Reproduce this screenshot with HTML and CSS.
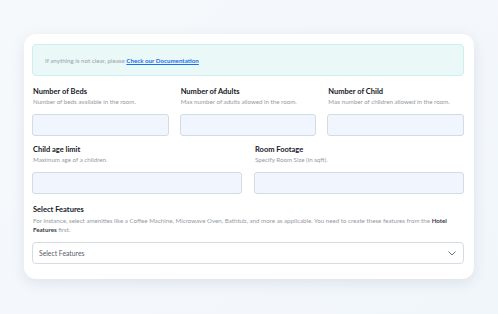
FILE: index.html
```html
<!DOCTYPE html>
<html>
<head>
<meta charset="utf-8">
<link rel="stylesheet" href="styles.css">
</head>
<body>
<div class="card">
  <div class="alert">If anything is not clear, please <a href="#" class="alert-link">Check our Documentation</a></div>
  <div class="row row-3">
    <div class="field">
      <div class="label">Number of Beds</div>
      <div class="desc">Number of beds available in the room.</div>
      <div class="input"></div>
    </div>
    <div class="field">
      <div class="label">Number of Adults</div>
      <div class="desc">Max number of adults allowed in the room.</div>
      <div class="input"></div>
    </div>
    <div class="field">
      <div class="label">Number of Child</div>
      <div class="desc">Max number of children allowed in the room.</div>
      <div class="input"></div>
    </div>
  </div>
  <div class="row row-2">
    <div class="field">
      <div class="label">Child age limit</div>
      <div class="desc">Maximum age of a children.</div>
      <div class="input"></div>
    </div>
    <div class="field">
      <div class="label">Room Footage</div>
      <div class="desc">Specify Room Size (in sqft).</div>
      <div class="input"></div>
    </div>
  </div>
  <div class="field features">
    <div class="label">Select Features</div>
    <div class="desc desc-wrap">For instance, select amenities like a Coffee Machine, Microwave Oven, Bathtub, and more as applicable. You need to create these features from the <span class="strong">Hotel</span> <span class="strong">Features</span> first.</div>
    <div class="select">
      <span class="placeholder">Select Features</span>
      <svg class="chev" width="8" height="5" viewBox="0 0 8 5"><path d="M0.8 0.8 L4 4 L7.2 0.8" fill="none" stroke="#6b7280" stroke-width="1" stroke-linecap="round" stroke-linejoin="round"/></svg>
    </div>
  </div>
</div>
</body>
</html>
```
FILE: styles.css
```css
* { box-sizing: border-box; }
html, body { margin: 0; }
body {
  width: 498px;
  height: 314px;
  overflow: hidden;
  background: linear-gradient(135deg, #f6f9fc 0%, #f1f6fb 100%);
  font-family: "Lato", "Liberation Sans", sans-serif;
  padding: 34px 24px 0 24px;
}
.card {
  width: 450px;
  background: #fff;
  border-radius: 12px;
  box-shadow: 0 4px 14px rgba(30, 50, 80, 0.10);
  padding: 10px 10px 15px 8px;
}
.alert {
  height: 32px;
  background: #eaf8f8;
  border: 1px solid #cdeff0;
  border-radius: 4px;
  padding: 0 12px;
  display: flex;
  align-items: center;
  font-size: 6.2px;
  color: #9aa1aa;
  margin-bottom: 11px;
  white-space: pre;
}
.alert-link {
  color: #1a6ff0;
  text-decoration: underline;
  font-weight: 700;
}
.row { display: grid; margin-bottom: 9px; }
.row-3 { grid-template-columns: 1fr 1fr 1fr; column-gap: 11px; }
.row-2 { grid-template-columns: 1fr 1fr; column-gap: 12px; margin-bottom: 11px; }
.label {
  font-size: 7.5px;
  line-height: 10px;
  font-weight: 700;
  color: #16171f;
  padding-left: 1px;
}
.desc {
  font-size: 6.2px;
  line-height: 10px;
  color: #959aa2;
  padding-left: 1px;
}
.desc-wrap { line-height: 9px; padding-top: 1px; }
.strong { color: #3a3d4a; font-weight: 700; }
.input {
  margin-top: 7px;
  height: 22px;
  background: #f1f5fd;
  border: 1px solid #d3dbe6;
  border-radius: 3px;
}
.select {
  margin-top: 8px;
  height: 22px;
  background: #fff;
  border: 1px solid #d6dce4;
  border-radius: 4px;
  display: flex;
  align-items: center;
  justify-content: space-between;
  padding: 0 7px 0 6px;
}
.placeholder { font-size: 6.8px; color: #5b606a; }
.chev { display: block; }
```
